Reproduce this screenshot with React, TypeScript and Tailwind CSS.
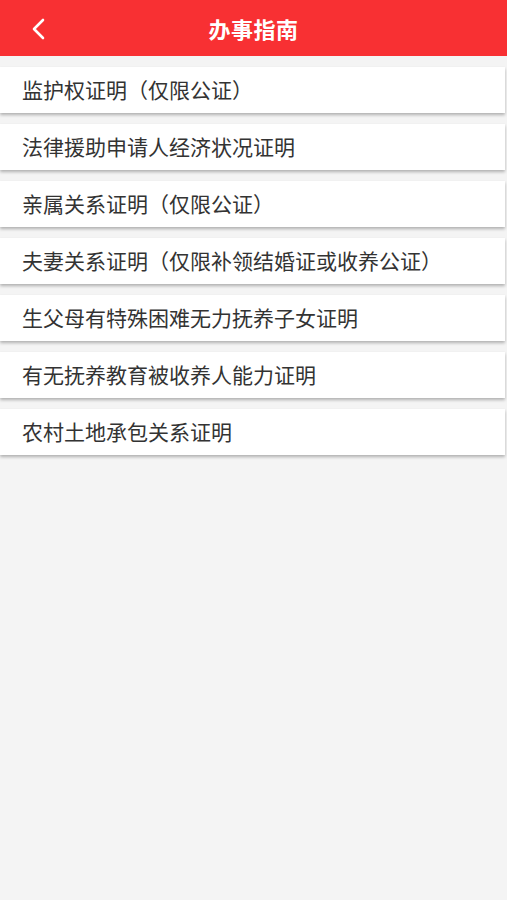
const items = [
  "监护权证明（仅限公证）",
  "法律援助申请人经济状况证明",
  "亲属关系证明（仅限公证）",
  "夫妻关系证明（仅限补领结婚证或收养公证）",
  "生父母有特殊困难无力抚养子女证明",
  "有无抚养教育被收养人能力证明",
  "农村土地承包关系证明",
];

export default function App() {
  return (
    <div
      className="w-[507px] h-[900px] bg-[#f4f4f4] flex flex-col"
      style={{ fontFamily: '"Noto Sans CJK SC", "Noto Sans", sans-serif' }}
    >
      <div className="h-[56px] bg-[#f83033] flex items-center relative shrink-0">
        <div className="absolute left-[28px] top-[18px]">
          <svg width="20" height="22" viewBox="0 0 20 22" fill="none">
            <path d="M15 2 L6 11 L15 20" stroke="white" strokeWidth="2.6" strokeLinecap="round" strokeLinejoin="round" />
          </svg>
        </div>
        <div className="flex-1 text-center text-white text-[22px] font-bold leading-none tracking-[0.5px]">办事指南</div>
      </div>
      <div className="flex flex-col gap-[11px] pt-[11px] pr-[2px]">
        {items.map((t) => (
          <div
            key={t}
            className="h-[46px] bg-white flex items-center pl-[22px] text-[#333] text-[21px] shadow-[0_2px_3px_rgba(0,0,0,0.28)]"
          >
            {t}
          </div>
        ))}
      </div>
    </div>
  );
}
